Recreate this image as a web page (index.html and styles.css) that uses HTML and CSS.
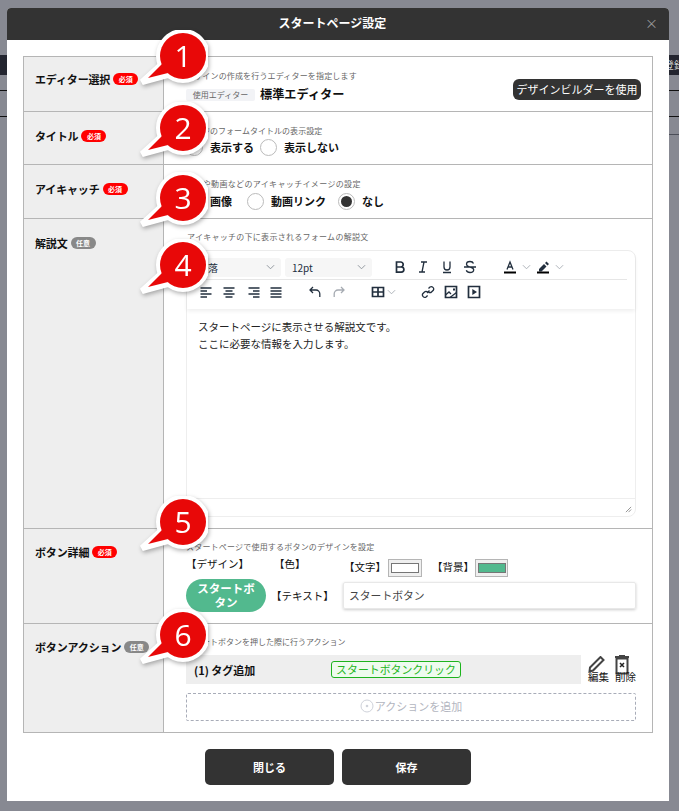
FILE: index.html
```html
<!DOCTYPE html>
<html lang="ja">
<head>
<meta charset="utf-8">
<title>スタートページ設定</title>
<link rel="stylesheet" href="styles.css">
</head>
<body>
<div class="page">
  <div class="side">
    <div class="side-bar"></div>
    <div class="side-line l1"></div>
    <div class="side-line l2"></div>
  </div>
  <div class="modal">
    <header class="modal-head">
      <h1 class="modal-title">スタートページ設定</h1>
      <span class="modal-close">×</span>
    </header>
    <div class="modal-body">
      <div class="table">
        <section class="row r1">
          <div class="label"><span>エディター選択</span><em class="badge req">必須</em></div>
          <div class="cell">
            <p class="desc">デザインの作成を行うエディターを指定します</p>
            <div class="editor-line">
              <span class="chip">使用エディター</span>
              <strong class="editor-name">標準エディター</strong>
              <button class="builder">デザインビルダーを使用</button>
            </div>
          </div>
        </section>
        <section class="row r2">
          <div class="label"><span>タイトル</span><em class="badge req">必須</em></div>
          <div class="cell">
            <p class="desc">ページのフォームタイトルの表示設定</p>
            <div class="radios">
              <span class="radio"></span><b class="rtext gap1">表示する</b>
              <span class="radio"></span><b class="rtext">表示しない</b>
            </div>
          </div>
        </section>
        <section class="row r3">
          <div class="label"><span>アイキャッチ</span><em class="badge req">必須</em></div>
          <div class="cell">
            <p class="desc">画像や動画などのアイキャッチイメージの設定</p>
            <div class="radios">
              <span class="radio"></span><b class="rtext gap2">画像</b>
              <span class="radio"></span><b class="rtext gap3">動画リンク</b>
              <span class="radio on"></span><b class="rtext">なし</b>
            </div>
          </div>
        </section>
        <section class="row r4">
          <div class="label"><span>解説文</span><em class="badge opt">任意</em></div>
          <div class="cell">
            <p class="desc">アイキャッチの下に表示されるフォームの解説文</p>
            <div class="editor">
              <div class="toolbar">
                <div class="tb-row tb-top">
                  <span class="select s1">段落<svg class="chev" viewBox="0 0 10 6"><path d="M1 1l4 4 4-4"/></svg></span>
                  <span class="select s2">12pt<svg class="chev" viewBox="0 0 10 6"><path d="M1 1l4 4 4-4"/></svg></span>
                  <svg class="ti t-b" viewBox="0 0 14 14"><path class="th" d="M3.500 2h4.200a2.400 2.400 0 0 1 0 5H3.500zM3.500 7h4.800a2.600 2.600 0 0 1 0 5.200H3.500z"/></svg>
                  <svg class="ti t-i" viewBox="0 0 14 14"><path d="M5 2h6M3 12h6M8 2L6 12"/></svg>
                  <svg class="ti t-u" viewBox="0 0 14 14"><path d="M4 1.500v5.500a3 3 0 0 0 6 0V1.500M3 12.500h8"/></svg>
                  <svg class="ti t-s" viewBox="0 0 14 14"><path d="M10.500 3.500c-.5-1.300-2-2-3.500-2-2 0-3.500 1-3.500 2.800 0 3.700 7.200 2 7.200 5.500 0 1.700-1.600 2.700-3.700 2.700-1.700 0-3.200-.8-3.700-2.200M1 7h12"/></svg>
                  <svg class="ti t-a" viewBox="0 0 14 14"><path d="M4 9.500L7 2l3 7.500M5 7h4"/><path class="bar" d="M1 12.500h12"/></svg>
                  <svg class="chev c-a" viewBox="0 0 10 6"><path d="M1 1l4 4 4-4"/></svg>
                  <svg class="ti t-p" viewBox="0 0 14 14"><path class="fill" d="M3 9l5-5 2.500 2.500-5 5H3zM9 3l1.500-1.500 2.500 2.500-1.500 1.500z"/><path class="bar" d="M1 12.500h12"/></svg>
                  <svg class="chev c-p" viewBox="0 0 10 6"><path d="M1 1l4 4 4-4"/></svg>
                </div>
                <div class="tb-row tb-bottom">
                  <svg class="ti a1" viewBox="0 0 14 14"><path d="M1.500 3h11M1.500 6h6.500M1.500 9h11M1.500 12h6.500"/></svg>
                  <svg class="ti a2" viewBox="0 0 14 14"><path d="M1.500 3h11M3.500 6h7M1.500 9h11M3.500 12h7"/></svg>
                  <svg class="ti a3" viewBox="0 0 14 14"><path d="M1.500 3h11M6 6h6.500M1.500 9h11M6 12h6.500"/></svg>
                  <svg class="ti a4" viewBox="0 0 14 14"><path d="M1.500 3h11M1.500 6h11M1.500 9h11M1.500 12h11"/></svg>
                  <svg class="ti undo" viewBox="0 0 14 14"><path d="M5 2L2 5l3 3M2 5h6a3.800 3.800 0 0 1 3.800 3.800V12"/></svg>
                  <svg class="ti redo" viewBox="0 0 14 14"><path d="M9 2l3 3-3 3M12 5H6a3.800 3.800 0 0 0-3.800 3.800V12"/></svg>
                  <svg class="ti tbl" viewBox="0 0 14 14"><path class="th" d="M1.500 2.500h11v9h-11zM1.500 7h11M7 2.500v9"/></svg>
                  <svg class="chev c-t" viewBox="0 0 10 6"><path d="M1 1l4 4 4-4"/></svg>
                  <svg class="ti lnk" viewBox="0 0 14 14"><path d="M6 8l2.500-2.500M7.500 3.500l1.500-1.500a2.400 2.400 0 0 1 3.300 3.300L10.500 7a2 2 0 0 1-3 0M6.500 7a2 2 0 0 0-3 0L1.800 8.700A2.400 2.400 0 0 0 5.100 12l1.500-1.500"/></svg>
                  <svg class="ti img" viewBox="0 0 14 14"><path class="th" d="M1.500 1.500h11v11h-11z"/><path d="M1.500 10l3.500-3 2 2M6 12.500l6.500-5"/><path class="fill" d="M9 3.500h2v2H9z"/></svg>
                  <svg class="ti med" viewBox="0 0 14 14"><path class="th" d="M1.500 1.500h11v11h-11z"/><path class="fill" d="M5.300 4l4.700 3-4.700 3z"/></svg>
                </div>
              </div>
              <div class="editor-text">
                <p>スタートページに表示させる解説文です。</p>
                <p>ここに必要な情報を入力します。</p>
              </div>
              <div class="status"><svg class="grip" viewBox="0 0 8 8"><path d="M7 1L1 7M7 4L4 7"/></svg></div>
            </div>
          </div>
        </section>
        <section class="row r5">
          <div class="label"><span>ボタン詳細</span><em class="badge req">必須</em></div>
          <div class="cell">
            <p class="desc">スタートページで使用するボタンのデザインを設定</p>
            <div class="color-line">
              <span class="br b-design">【デザイン】</span>
              <span class="br b-color">【色】</span>
              <span class="br b-text">【文字】</span>
              <span class="swatch"><i class="sw-white"></i></span>
              <span class="br b-bg">【背景】</span>
              <span class="swatch"><i class="sw-green"></i></span>
            </div>
            <div class="text-line">
              <button class="start">スタートボタン</button>
              <span class="br b-label">【テキスト】</span>
              <span class="input">スタートボタン</span>
            </div>
          </div>
        </section>
        <section class="row r6">
          <div class="label"><span>ボタンアクション</span><em class="badge opt">任意</em></div>
          <div class="cell">
            <p class="desc">スタートボタンを押した際に行うアクション</p>
            <div class="action-line">
              <div class="action">
                <b class="action-name">(1) タグ追加</b>
                <span class="tag">スタートボタンクリック</span>
              </div>
              <div class="tool tool-edit">
                <svg class="pen" viewBox="0 0 17 17"><path d="M2 11.500L12.500 1l3 3L5 14.500 1.500 15.500z"/></svg>
                <span>編集</span>
              </div>
              <div class="tool tool-del">
                <svg class="trash" viewBox="0 0 14 20"><path class="lid" d="M0 2h14M4 1h6"/><path class="can" d="M1.500 3.500h11v15h-11z"/><path class="x" d="M5 8l4 4M9 8l-4 4"/></svg>
                <span>削除</span>
              </div>
            </div>
            <div class="add">
              <svg class="add-icon" viewBox="0 0 14 14"><circle class="ring" cx="7" cy="7" r="6"/><circle class="dot" cx="7" cy="7" r="1.300"/></svg>
              <span>アクションを追加</span>
            </div>
          </div>
        </section>
      </div>
      <footer class="foot">
        <button class="btn">閉じる</button>
        <button class="btn">保存</button>
      </footer>
    </div>
  </div>
  <div class="side side-r">
    <div class="side-bar"><span class="side-text">登録</span></div>
    <div class="side-line l1"></div>
    <div class="side-line l2"></div>
    <div class="side-line l3"></div>
  </div>

  <div class="callout c1"><svg viewBox="0 0 72 62"><g class="co-w"><circle cx="47" cy="26" r="24"/><path d="M27 33L6 52 32 45z"/></g><g class="co-r"><circle cx="47" cy="26" r="23"/><path d="M27 33L12 48 32 43z"/></g></svg><span>1</span></div>
  <div class="callout c2"><svg viewBox="0 0 72 62"><g class="co-w"><circle cx="47" cy="26" r="24"/><path d="M27 33L6 52 32 45z"/></g><g class="co-r"><circle cx="47" cy="26" r="23"/><path d="M27 33L12 48 32 43z"/></g></svg><span>2</span></div>
  <div class="callout c3"><svg viewBox="0 0 72 62"><g class="co-w"><circle cx="47" cy="26" r="24"/><path d="M27 33L6 52 32 45z"/></g><g class="co-r"><circle cx="47" cy="26" r="23"/><path d="M27 33L12 48 32 43z"/></g></svg><span>3</span></div>
  <div class="callout c4"><svg viewBox="0 0 72 62"><g class="co-w"><circle cx="47" cy="26" r="24"/><path d="M27 33L6 52 32 45z"/></g><g class="co-r"><circle cx="47" cy="26" r="23"/><path d="M27 33L12 48 32 43z"/></g></svg><span>4</span></div>
  <div class="callout c5"><svg viewBox="0 0 72 62"><g class="co-w"><circle cx="47" cy="26" r="24"/><path d="M27 33L6 52 32 45z"/></g><g class="co-r"><circle cx="47" cy="26" r="23"/><path d="M27 33L12 48 32 43z"/></g></svg><span>5</span></div>
  <div class="callout c6"><svg viewBox="0 0 72 62"><g class="co-w"><circle cx="47" cy="26" r="24"/><path d="M27 33L6 52 32 45z"/></g><g class="co-r"><circle cx="47" cy="26" r="23"/><path d="M27 33L12 48 32 43z"/></g></svg><span>6</span></div>
</div>
</body>
</html>
```
FILE: styles.css
```css
* { box-sizing: border-box; }
html, body { margin: 0; padding: 0; height: 100%; }
body {
  background: #878992;
  font-family: "Noto Sans CJK JP", "Noto Sans", sans-serif;
  color: #111;
  overflow: hidden;
}
p, h1 { margin: 0; }
em { font-style: normal; }
button { font-family: inherit; border: 0; padding: 0; }

.page { position: relative; display: flex; width: 679px; height: 811px; padding-top: 8px; }
.side { width: 7px; flex: none; overflow: hidden; padding-top: 47px; }
.side-r { width: 10px; }
.side-bar { height: 20px; background: #23252f; color: #ccc; font-size: 10px; line-height: 20px; white-space: nowrap; overflow: hidden; }
.side-text { display: block; margin-left: -5px; }
.side-line { height: 1px; background: #111; }
.side .l1 { margin-top: 15px; }
.side .l2 { margin-top: 25px; }
.side .l3 { margin-top: 17px; background: #4b4e58; }

.modal { width: 662px; height: 793px; flex: none; background: #fff; border-radius: 4px 4px 0 0; }
.modal-head { position: relative; height: 32px; background: #333; border-radius: 4px 4px 0 0; display: flex; align-items: center; justify-content: center; padding: 0 11px 2px 0; }
.modal-title { color: #fff; font-size: 12px; font-weight: 700; line-height: 30px; }
.modal-close { position: absolute; right: 11px; top: 5px; color: #999; font-size: 13px; line-height: 20px; }
.modal-body { padding: 16px 16px 0; }

.table { border: 1px solid #b5b5b5; border-bottom: 0; }
.row { display: flex; border-bottom: 1px solid #b5b5b5; }
.r1 { height: 55px; }
.r2 { height: 53px; }
.r3 { height: 54px; }
.r4 { height: 310px; }
.r5 { height: 95px; }
.r6 { height: 109px; }
.label { width: 140px; flex: none; background: #eee; border-right: 1px solid #b5b5b5; padding: 15px 0 0 11px; display: flex; align-items: flex-start; gap: 3px; font-size: 11px; font-weight: 700; line-height: 18px; white-space: nowrap; letter-spacing: -.15px; }
.r1 .label { padding-top: 13px; }
.r4 .label { padding-top: 15px; }
.r5 .label { padding-top: 14px; }
.r6 .label { padding-top: 14px; }
.badge { margin-top: 3px; height: 12px; width: 25px; flex: none; border-radius: 6px; color: #fff; font-size: 7px; line-height: 12px; text-align: center; letter-spacing: 0; }
.req { background: #f00; }
.opt { background: #888; }

.cell { flex: 1; min-width: 0; padding: 13px 16px 0 22px; }
.desc { font-size: 8px; line-height: 12px; color: #666; letter-spacing: .16px; white-space: nowrap; }
.r2 .desc { letter-spacing: .04px; }
.r3 .desc { letter-spacing: .35px; }
.r4 .desc { letter-spacing: .28px; margin-left: 1px; }
.r5 .desc { letter-spacing: .2px; }
.r6 .desc { letter-spacing: 0; }

.editor-line { display: flex; align-items: center; margin-top: 0; height: 22px; }
.chip { width: 69px; height: 12px; background: #f2f3f6; border-radius: 2px; font-size: 8px; line-height: 12px; color: #666; text-align: center; margin-top: 3px; }
.editor-name { margin-left: 5px; font-size: 12.200px; font-weight: 700; margin-top: 1px; }
.builder { margin-left: auto; margin-right: -5px; height: 21px; width: 128px; margin-top: -8px; border-radius: 6px; background: #333; color: #fff; font-size: 11px; line-height: 21px; }

.radios { display: flex; align-items: center; height: 20px; margin-top: 0; }
.r3 .radios { margin-top: 1px; }
.radio { width: 17px; height: 17px; flex: none; border: 1px solid #bbb; border-radius: 50%; background: #fff; display: flex; align-items: center; justify-content: center; }
.radio.on::after { content: ""; width: 11px; height: 11px; border-radius: 50%; background: #333; }
.rtext { margin-left: 7px; font-size: 11px; font-weight: 700; line-height: 18px; }
.gap1 { margin-right: 6px; }
.gap2 { margin-right: 15px; }
.gap3 { margin-right: 12px; }

.r4 .cell { padding-top: 12px; }
.editor { width: 450px; height: 267px; margin-top: 7px; border: 1px solid #eee; border-radius: 8px; display: flex; flex-direction: column; }
.toolbar { height: 58px; flex: none; padding: 0 8px 0 4px; box-shadow: 0 2px 4px rgba(0, 0, 0, .07); border-radius: 8px 8px 0 0; }
.tb-row { position: relative; display: flex; align-items: center; }
.tb-top { height: 29px; border-bottom: 1px solid #e6e6e6; padding-top: 4px; }
.tb-bottom { height: 28px; padding-bottom: 4px; }
.select { width: 90px; height: 19px; background: #f6f6f6; border-radius: 3px; font-size: 10px; line-height: 19px; color: #222f3e; padding-left: 7px; display: flex; align-items: center; justify-content: space-between; padding-right: 6px; flex: none; }
.s2 { width: 87px; margin-left: 4px; }
.chev { width: 9px; height: 6px; flex: none; fill: none; stroke: #a6abb2; stroke-width: 1; }
.select .chev { stroke: #888e96; }
.ti { width: 14px; height: 14px; flex: none; fill: none; stroke: #222f3e; stroke-width: 1.300; }
.ti .th { stroke-width: 1.700; }
.ti .fill { fill: #222f3e; stroke: none; }
.ti .bar { stroke: #000; stroke-width: 2; }
.t-b { margin-left: 21px; }
.t-i { margin-left: 9px; }
.t-u { margin-left: 10px; }
.t-s { margin-left: 9px; }
.t-a { margin-left: 26px; }
.c-a { margin-left: 5px; }
.t-p { margin-left: 5px; }
.c-p { margin-left: 5px; }
.a1 { margin-left: 8px; }
.a2 { margin-left: 9px; }
.a3 { margin-left: 11px; }
.a4 { margin-left: 8px; }
.undo { margin-left: 25px; }
.redo { margin-left: 10px; stroke: #a6abb2; }
.tbl { margin-left: 25px; }
.c-t { margin-left: 2px; }
.lnk { margin-left: 25px; }
.img { margin-left: 9px; }
.med { margin-left: 9px; }
.editor-text { flex: 1; padding: 9px 11px 0; font-size: 10.500px; line-height: 17px; color: #222; }
.status { height: 18px; flex: none; border-top: 1px solid #eee; display: flex; justify-content: flex-end; align-items: flex-end; padding: 0 3px 3px 0; }
.grip { width: 7px; height: 7px; fill: none; stroke: #888; stroke-width: 1; }

.r5 .cell { padding-top: 12px; }
.color-line { display: flex; align-items: center; height: 20px; margin-top: 1px; white-space: nowrap; }
.br { font-size: 10.500px; line-height: 18px; flex: none; }
.b-design { width: 88px; }
.b-color { width: 70px; }
.b-text { width: 44px; margin-top: 6px; }
.b-bg { width: 43px; margin-left: 10px; margin-top: 6px; }
.swatch { width: 34px; height: 18px; margin-top: 7px; background: #efefef; border: 1px solid #b5b5b5; display: flex; align-items: center; justify-content: center; flex: none; }
.swatch:last-child { width: 33px; }
.swatch i { display: block; width: 28px; height: 10px; border: 1px solid #767676; }
.sw-white { background: #fff; }
.sw-green { background: #52b98e; }
.text-line { display: flex; align-items: center; margin-top: 4px; height: 34px; }
.start { width: 80px; height: 33px; border-radius: 17px; background: #52b98e; color: #fff; font-size: 11.500px; font-weight: 700; line-height: 14px; padding: 0 10px; flex: none; }
.b-label { width: 68px; margin-left: 5px; margin-right: 4px; margin-top: 2px; }
.input { width: 293px; height: 27px; margin-top: 1px; border: 1px solid #e8e8e8; border-radius: 2px; box-shadow: 0 1px 3px rgba(0, 0, 0, .2); font-size: 10.800px; line-height: 25px; padding-left: 5px; color: #444; }

.r6 .cell { padding-top: 12px; }
.action-line { display: flex; margin-top: 7px; height: 29px; }
.action { width: 395px; background: #eee; display: flex; align-items: center; padding-left: 8px; flex: none; }
.action-name { width: 137px; font-size: 11px; font-weight: 700; flex: none; }
.tag { width: 130px; height: 17px; border: 1px solid #1db31d; border-radius: 3px; background: #eefbee; color: #22b522; font-size: 10.900px; line-height: 15px; text-align: center; white-space: nowrap; }
.tool { position: relative; width: 27px; height: 29px; flex: none; font-size: 10.500px; line-height: 12px; white-space: nowrap; }
.tool span { position: absolute; left: 0; top: 16px; }
.tool-edit { margin-left: 7px; }
.pen { position: absolute; left: 0; top: 1px; width: 17px; height: 17px; fill: #fff; stroke: #444; stroke-width: 2; }
.trash { position: absolute; left: 0; top: 0; width: 14px; height: 20px; fill: none; stroke: #444; }
.trash .lid { stroke-width: 2; }
.trash .can { stroke-width: 2; }
.trash .x { stroke-width: 1.500; stroke: #222; }
.add { width: 450px; height: 28px; margin-top: 9px; padding-bottom: 2px; border: 1px dashed #a8acb8; border-radius: 2px; display: flex; align-items: center; justify-content: center; gap: 1px; font-size: 11px; color: #b3b6c0; }
.add-icon { width: 14px; height: 14px; fill: none; }
.ring { stroke: #cfd2da; stroke-width: 1; }
.dot { fill: #cfd2da; }

.foot { display: flex; justify-content: center; gap: 8px; padding-top: 16px; }
.btn { width: 129px; height: 36px; border-radius: 5px; background: #333; color: #fff; font-size: 11px; font-weight: 700; }

.callout { position: absolute; width: 72px; height: 62px; left: 136px; filter: drop-shadow(1px 2px 2px rgba(0, 0, 0, .3)); }
.callout svg { display: block; width: 72px; height: 62px; }
.co-w { fill: #fff; stroke: #fff; stroke-width: 6; stroke-linejoin: miter; }
.co-r { fill: #e80808; }
.callout span { position: absolute; left: 23px; top: 2px; width: 48px; height: 48px; color: #fff; font-family: "Open Sans", "Noto Sans", sans-serif; font-size: 30px; line-height: 48px; text-align: center; }
.c1 { top: 30px; }
.c2 { top: 102px; }
.c3 { top: 172px; }
.c4 { top: 239px; }
.c5 { top: 496px; }
.c6 { top: 609px; }
```
